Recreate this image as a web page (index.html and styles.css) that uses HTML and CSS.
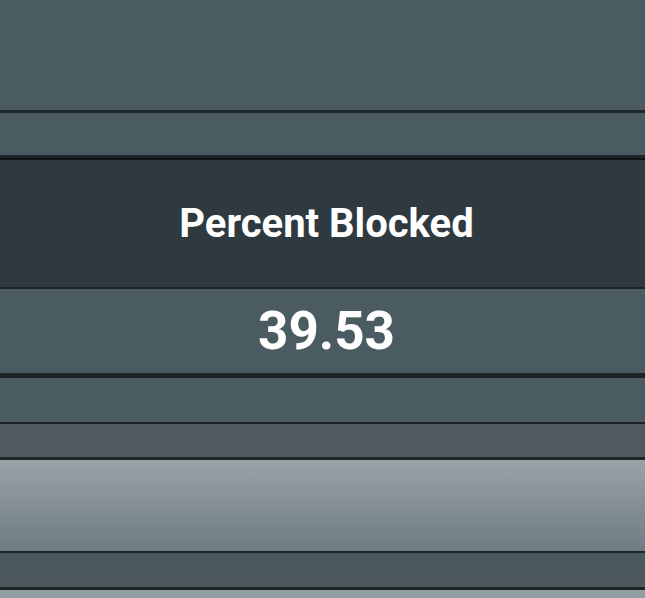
FILE: index.html
```html
<!DOCTYPE html>
<html>
<head>
<meta charset="utf-8">
<link rel="stylesheet" href="styles.css">
</head>
<body>
<div class="stack">
  <div class="row r-top"></div>
  <div class="row r-thin1"></div>
  <div class="row r-header"><h1 class="title">Percent Blocked</h1></div>
  <div class="row r-value"><div class="value">39.53</div></div>
  <div class="row r-thin2"></div>
  <div class="row r-grey"></div>
  <div class="row r-light"></div>
  <div class="row r-thin3"></div>
  <div class="row r-end"></div>
</div>
</body>
</html>
```
FILE: styles.css
```css
html, body {
  margin: 0;
  padding: 0;
  background: #485a60;
}
body {
  width: 645px;
  height: 598px;
  overflow: hidden;
  font-family: Roboto, "Liberation Sans", sans-serif;
}
.stack {
  display: flex;
  flex-direction: column;
}
.row {
  box-sizing: border-box;
  flex: none;
}
.r-top {
  height: 113px;
  background: #4a5c62;
  border-bottom: 3px solid #1e2729;
}
.r-thin1 {
  height: 45px;
  background: #4a5c62;
  border-bottom: 3px solid #1e2629;
}
.r-header {
  height: 131px;
  background: #2f3a40;
  border-top: 2px solid #0f1416;
  border-bottom: 2px solid #1c2427;
  display: flex;
  align-items: center;
  justify-content: center;
  padding-left: 8px;
}
.title {
  margin: 0;
  color: #ffffff;
  font-size: 40px;
  font-weight: 700;
}
.r-value {
  height: 89px;
  background: #4a5c62;
  border-bottom: 5px solid #1f2427;
  display: flex;
  align-items: center;
  justify-content: center;
  padding-left: 8px;
}
.value {
  color: #ffffff;
  font-size: 53px;
  font-weight: 700;
}
.r-thin2 {
  height: 46px;
  background: #4a5c62;
  border-bottom: 2px solid #1d2528;
}
.r-grey {
  height: 36px;
  background: #4f5a5e;
  border-bottom: 3px solid #1f2427;
}
.r-light {
  height: 93px;
  background: linear-gradient(#98a3a8, #6f7c83);
  border-bottom: 2px solid #1d2629;
}
.r-thin3 {
  height: 37px;
  background: linear-gradient(#485a60, #4d575c);
  border-bottom: 3px solid #1f2427;
}
.r-end {
  height: 20px;
  background: #939ea3;
}
```
